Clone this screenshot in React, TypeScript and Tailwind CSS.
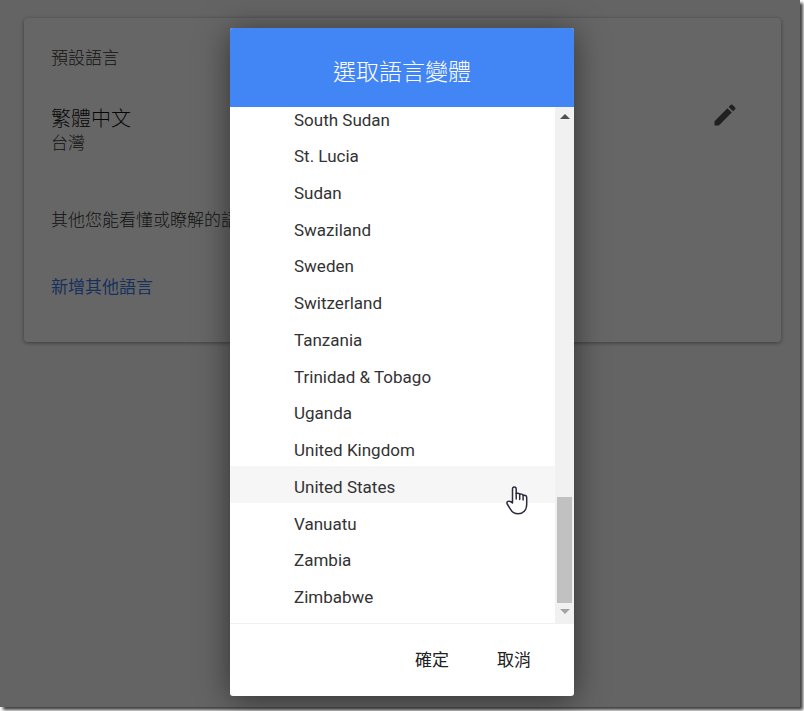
import { clsx } from "clsx";
import { MdEdit } from "react-icons/md";

const COUNTRIES = [
  "South Sudan",
  "St. Lucia",
  "Sudan",
  "Swaziland",
  "Sweden",
  "Switzerland",
  "Tanzania",
  "Trinidad & Tobago",
  "Uganda",
  "United Kingdom",
  "United States",
  "Vanuatu",
  "Zambia",
  "Zimbabwe",
];

const HOVERED = "United States";

function LanguageCard() {
  return (
    <section className="rounded-sm bg-white pt-7 pr-[42px] pb-[43px] pl-[27px] text-[17px] leading-6 text-[#333] shadow-[0_1px_4px_rgba(0,0,0,0.4)]">
      <h2>預設語言</h2>
      <div className="mt-[31px] flex items-start justify-between">
        <div className="pt-1.5">
          <p className="text-[20px] text-[#111]">繁體中文</p>
          <p>台灣</p>
        </div>
        <button type="button" aria-label="編輯" className="text-[#505050]">
          <MdEdit className="h-7 w-7" />
        </button>
      </div>
      <h2 className="mt-[53px]">其他您能看懂或瞭解的語言</h2>
      <a href="#add" className="mt-[43px] inline-block align-top font-normal text-[#3b78e7]">
        新增其他語言
      </a>
    </section>
  );
}

function HandCursor() {
  return (
    <svg
      viewBox="0 0 22 29"
      className="pointer-events-none absolute top-5 right-[27px] h-[29px] w-[22px]"
      fill="#fff"
      stroke="#2b2b3d"
      strokeWidth="1.5"
      strokeLinejoin="round"
      strokeLinecap="round"
      aria-hidden="true"
    >
      <path d="M6.5 17V3.200C6.500 1.800 7.200 1 8.300 1s1.900.8 1.900 2.200V7.500c.8-.6 3-.5 3.500.8 1-.5 2.900-.3 3.400 1 1.500-.3 3.600.2 3.600 2.200V18.500c0 5.500-3.700 9.300-8.500 9.300-4 0-6.300-2-8-5L1.200 18c-.6-1.300-.2-2.300.8-2.600 1.600-.5 3.300.2 4.500 1.600z" />
      <path d="M10.200 7.500v5.500M13.700 8.300V13.500M17.100 9.300v4.700" fill="none" />
    </svg>
  );
}

function Scrollbar() {
  return (
    <div className="flex w-[19px] shrink-0 flex-col items-center bg-[#f1f1f1] pt-[7px] pb-[9px]" aria-hidden="true">
      <svg viewBox="0 0 10 5" className="h-[5px] w-2.5 shrink-0" fill="#505050">
        <path d="M5 0l5 5H0z" />
      </svg>
      <div className="flex-1" />
      <div className="h-[106px] w-[15px] bg-[#c1c1c1]" />
      <svg viewBox="0 0 10 5" className="mt-1.5 h-[5px] w-2.5 shrink-0" fill="#a3a3a3">
        <path d="M0 0h10L5 5z" />
      </svg>
    </div>
  );
}

function VariantDialog() {
  return (
    <div
      role="dialog"
      aria-labelledby="variant-title"
      className="flex w-[344px] flex-col overflow-hidden rounded-[3px] bg-white text-[17px] text-[#333] shadow-[0_4px_32px_rgba(0,0,0,0.5)]"
    >
      <header className="bg-[#4285f4] pt-[31px] pb-5 text-center text-white">
        <h1 id="variant-title" className="text-[23px] leading-7 font-light">
          選取語言變體
        </h1>
      </header>
      <div className="flex min-h-0 flex-1 overflow-hidden">
        <ul className="-mt-2 flex flex-1 flex-col pb-2.5">
          {COUNTRIES.map((name) => (
            <li key={name} className={clsx("relative flex flex-1", name === HOVERED && "bg-[#f6f6f6]")}>
              <button type="button" className="flex-1 pt-1.5 pl-16 text-left">
                {name}
              </button>
              {name === HOVERED && <HandCursor />}
            </li>
          ))}
        </ul>
        <Scrollbar />
      </div>
      <footer className="flex justify-end gap-4 border-t border-[#f0f0f0] px-[27px] py-[18px] leading-9 text-[#212121]">
        <button type="button" className="px-4">
          確定
        </button>
        <button type="button" className="px-4">
          取消
        </button>
      </footer>
    </div>
  );
}

export default function App() {
  return (
    <div className="h-screen overflow-hidden bg-white pr-1 pb-1 font-['Roboto','Noto_Sans_CJK_TC',sans-serif] font-light">
      <div className="h-full bg-[#fafafa] pt-[18px] pr-[19px] pl-6 shadow-[3px_3px_3px_rgba(0,0,0,0.75)]">
        <LanguageCard />
      </div>
      <div className="absolute inset-0 pr-1 pb-1">
        <div className="h-full bg-black/60" />
      </div>
      <div className="absolute inset-0 flex justify-center pt-7 pb-[15px] font-normal">
        <VariantDialog />
      </div>
    </div>
  );
}
